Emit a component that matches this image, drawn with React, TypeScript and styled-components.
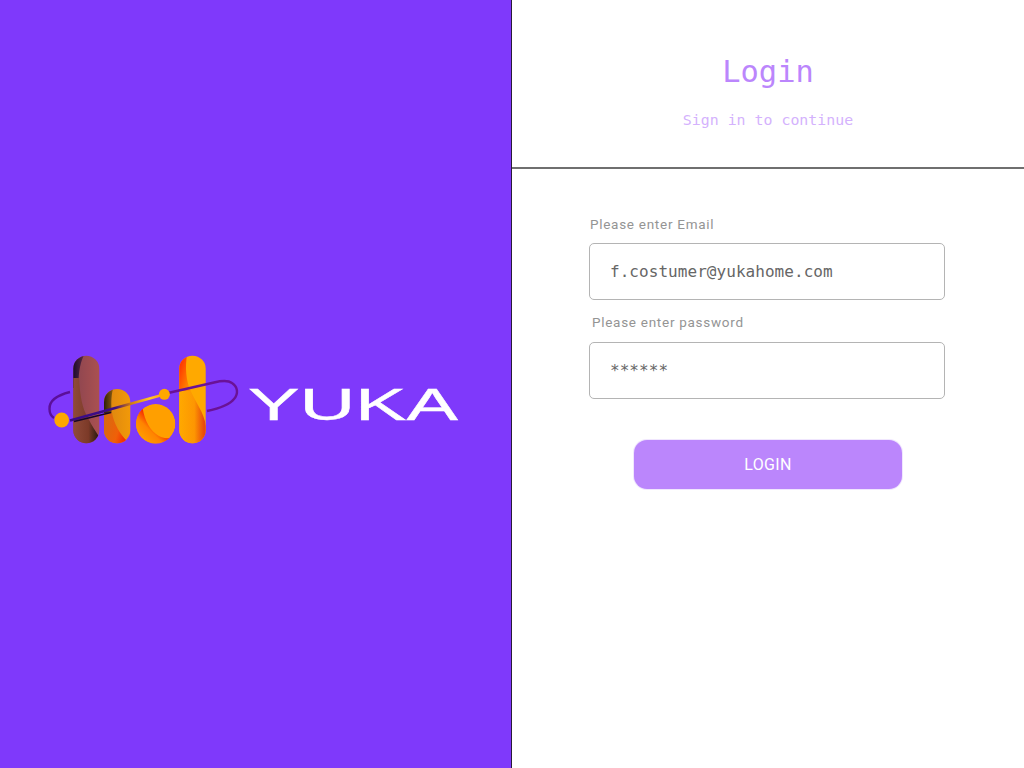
import React from "react";
import styled, { createGlobalStyle } from "styled-components";

const Global = createGlobalStyle`
  html, body { margin: 0; padding: 0; background: #fff; }
  body { font-family: Roboto, "Liberation Sans", sans-serif; }
`;

const Page = styled.main`
  display: grid;
  grid-template-columns: 512px 512px;
  width: 1024px;
  height: 768px;
  overflow: hidden;
`;

const BrandPane = styled.section`
  display: flex;
  align-items: center;
  justify-content: flex-start;
  box-sizing: border-box;
  padding: 26px 0 0 40px;
  background: #7f39fb;
  border-right: 1px solid #2a1a3a;
`;

const LoginPane = styled.section`
  display: flex;
  flex-direction: column;
`;

const Header = styled.header`
  display: flex;
  flex-direction: column;
  align-items: center;
  box-sizing: border-box;
  height: 169px;
  padding-top: 52px;
  border-bottom: 2px solid #6f6f6f;
`;

const Title = styled.h1`
  margin: 0;
  font-family: "DejaVu Sans Mono", "Liberation Mono", monospace;
  font-size: 30.4px;
  line-height: 40px;
  font-weight: 400;
  color: #bb86fc;
`;

const Subtitle = styled.p`
  margin: 18px 0 0;
  font-family: "DejaVu Sans Mono", "Liberation Mono", monospace;
  font-size: 14.9px;
  line-height: 20px;
  font-weight: 400;
  color: #d4b2fd;
`;

const Form = styled.form`
  display: flex;
  flex-direction: column;
  box-sizing: border-box;
  width: 356px;
  margin: 45px 0 0 77px;
`;

const Label = styled.label<{ $indent: number; $top: number; $bottom: number }>`
  margin: ${(p) => p.$top}px 0 ${(p) => p.$bottom}px ${(p) => p.$indent}px;
  font-size: 13.5px;
  line-height: 20px;
  letter-spacing: 0.72px;
  color: #949494;
`;

const Field = styled.input`
  box-sizing: border-box;
  width: 356px;
  height: 57px;
  margin-bottom: 1px;
  padding: 0 20px;
  border: 1.5px solid #b4b4b4;
  border-radius: 5px;
  outline: none;
  background: #fff;
  font-family: "DejaVu Sans Mono", "Liberation Mono", monospace;
  font-size: 16px;
  letter-spacing: 0.05px;
  color: #666;
`;

const Submit = styled.button`
  align-self: flex-start;
  width: 268px;
  height: 49px;
  margin: 40px 0 0 45px;
  border: none;
  border-radius: 13px;
  box-shadow: 0 0 0 1px #f0e6fe;
  background: #bb86fc;
  font-family: Roboto, "Liberation Sans", sans-serif;
  font-size: 16px;
  letter-spacing: 0.3px;
  color: #fff;
`;

function Logo() {
  return (
    <svg width={430} height={105} viewBox="40 345 430 105" aria-label="Yuka logo">
      <defs>
        <linearGradient id="barA" x1="0" x2="1" y1="0" y2="0">
          <stop offset="0" stopColor="#8a4450" />
          <stop offset="1" stopColor="#ab5150" />
        </linearGradient>
        <linearGradient id="barATop" x1="0" x2="1" y1="0" y2="0">
          <stop offset="0" stopColor="#1c0a2c" />
          <stop offset="1" stopColor="#5a2a44" />
        </linearGradient>
        <linearGradient id="barALow" gradientUnits="userSpaceOnUse" x1="74" y1="420" x2="98" y2="420">
          <stop offset="0" stopColor="#8e4a38" />
          <stop offset="0.6" stopColor="#7c3a28" />
          <stop offset="1" stopColor="#2a1a10" />
        </linearGradient>
        <linearGradient id="barB" x1="0" x2="1" y1="0" y2="0">
          <stop offset="0" stopColor="#d98212" />
          <stop offset="1" stopColor="#f29a08" />
        </linearGradient>
        <linearGradient id="barBTop" x1="0" x2="1" y1="0" y2="0">
          <stop offset="0" stopColor="#2c2008" />
          <stop offset="1" stopColor="#8a5a10" />
        </linearGradient>
        <linearGradient id="barBLow" gradientUnits="userSpaceOnUse" x1="104" y1="425" x2="128" y2="432">
          <stop offset="0" stopColor="#d86a10" />
          <stop offset="0.6" stopColor="#f06008" />
          <stop offset="1" stopColor="#f52800" />
        </linearGradient>
        <linearGradient id="circleLow" gradientUnits="userSpaceOnUse" x1="142" y1="438" x2="156" y2="424">
          <stop offset="0" stopColor="#ff9c00" />
          <stop offset="0.55" stopColor="#ff8400" />
          <stop offset="1" stopColor="#f52c00" />
        </linearGradient>
        <linearGradient id="barDLow" gradientUnits="userSpaceOnUse" x1="180" y1="415" x2="204" y2="415">
          <stop offset="0" stopColor="#ffa800" />
          <stop offset="0.6" stopColor="#fd9602" />
          <stop offset="1" stopColor="#e84a0a" />
        </linearGradient>
        <linearGradient id="barDTop" x1="0" x2="1" y1="0" y2="1">
          <stop offset="0" stopColor="#ff2200" />
          <stop offset="1" stopColor="#ff9a00" />
        </linearGradient>
        <linearGradient id="beam" gradientUnits="userSpaceOnUse" x1="66" y1="420" x2="164" y2="394">
          <stop offset="0" stopColor="#3a0a88" />
          <stop offset="0.5" stopColor="#3c0e84" />
          <stop offset="0.66" stopColor="#d07a10" />
          <stop offset="0.85" stopColor="#ffc428" />
          <stop offset="1" stopColor="#ff9c10" />
        </linearGradient>
        <clipPath id="clipA"><rect x="73.3" y="355.7" width="26" height="87.6" rx="13" /></clipPath>
        <clipPath id="clipB"><rect x="104" y="389" width="26.3" height="54.3" rx="13" /></clipPath>
        <clipPath id="clipC"><circle cx="155.7" cy="423.7" r="19.7" /></clipPath>
        <clipPath id="clipD"><rect x="179.3" y="355.7" width="26.4" height="87.6" rx="13" /></clipPath>
      </defs>

      <path d="M70 392 C58 395 49 400 49.5 409 C49.5 413 51 416 54 418" fill="none" stroke="#5b0f9a" strokeWidth="2.4" />

      <g clipPath="url(#clipA)">
        <rect x="73" y="355" width="27" height="89" fill="url(#barA)" />
        <path d="M73 355 H84 C79 365 78 378 79 388 H73 Z" fill="url(#barATop)" />
        <path d="M73 378 L79 378 C80 395 82 408 88 418 C92 426 96 432 100 438 V444 H73 Z" fill="url(#barALow)" />
      </g>

      <g clipPath="url(#clipB)">
        <rect x="104" y="389" width="27" height="55" fill="url(#barB)" />
        <path d="M104 389 H113 C111 396 111 406 112 415 H104 Z" fill="url(#barBTop)" />
        <path d="M104 413 H112 C114 424 120 434 127 441 L130 444 H104 Z" fill="url(#barBLow)" />
      </g>

      <g clipPath="url(#clipC)">
        <circle cx="155.7" cy="423.7" r="19.7" fill="#ff9f00" />
        <path d="M142.3 404 C143 416 148 428 156 434 C161 438 166 439 172 438 L168 446 H134 V404 Z" fill="url(#circleLow)" />
      </g>

      <g clipPath="url(#clipD)">
        <rect x="179" y="355" width="27" height="89" fill="#ffa900" />
        <path d="M179 390 L190 389 C195 402 204 412 206 426 V444 H179 Z" fill="url(#barDLow)" />
        <path d="M179 355 H187 C185 368 186 380 190.5 391 L179 391 Z" fill="url(#barDTop)" />
      </g>

      <path d="M70 420.5 L164 394.5" stroke="url(#beam)" strokeWidth="2.6" />
      <path d="M74 421.5 L111 412.5" stroke="#160628" strokeWidth="1.5" />
      <path d="M168 393 L214 382.5 C222 380.6 228 380 232 383 C238 387 238.5 394 234 399 C230 404 221 408 207 411" fill="none" stroke="#6a1296" strokeWidth="2.4" />
      <circle cx="61.7" cy="420" r="7.4" fill="#ffa800" />
      <circle cx="164.4" cy="394.3" r="5.5" fill="#ffa800" />

      <text x="248" y="420" fill="#fff" stroke="#fff" strokeWidth="0.4" fontFamily="'Liberation Sans', sans-serif" fontSize="45" textLength="210" lengthAdjust="spacingAndGlyphs">
        YUKA
      </text>
    </svg>
  );
}

export default function App() {
  return (
    <>
      <Global />
      <Page>
        <BrandPane>
          <Logo />
        </BrandPane>
        <LoginPane>
          <Header>
            <Title>Login</Title>
            <Subtitle>Sign in to continue</Subtitle>
          </Header>
          <Form onSubmit={(e) => e.preventDefault()}>
            <Label $indent={1} $top={0} $bottom={9} htmlFor="email">Please enter Email</Label>
            <Field id="email" type="text" readOnly value="f.costumer@yukahome.com" />
            <Label $indent={3} $top={11} $bottom={10} htmlFor="password">Please enter password</Label>
            <Field id="password" type="text" readOnly value="******" />
            <Submit type="submit">LOGIN</Submit>
          </Form>
        </LoginPane>
      </Page>
    </>
  );
}
